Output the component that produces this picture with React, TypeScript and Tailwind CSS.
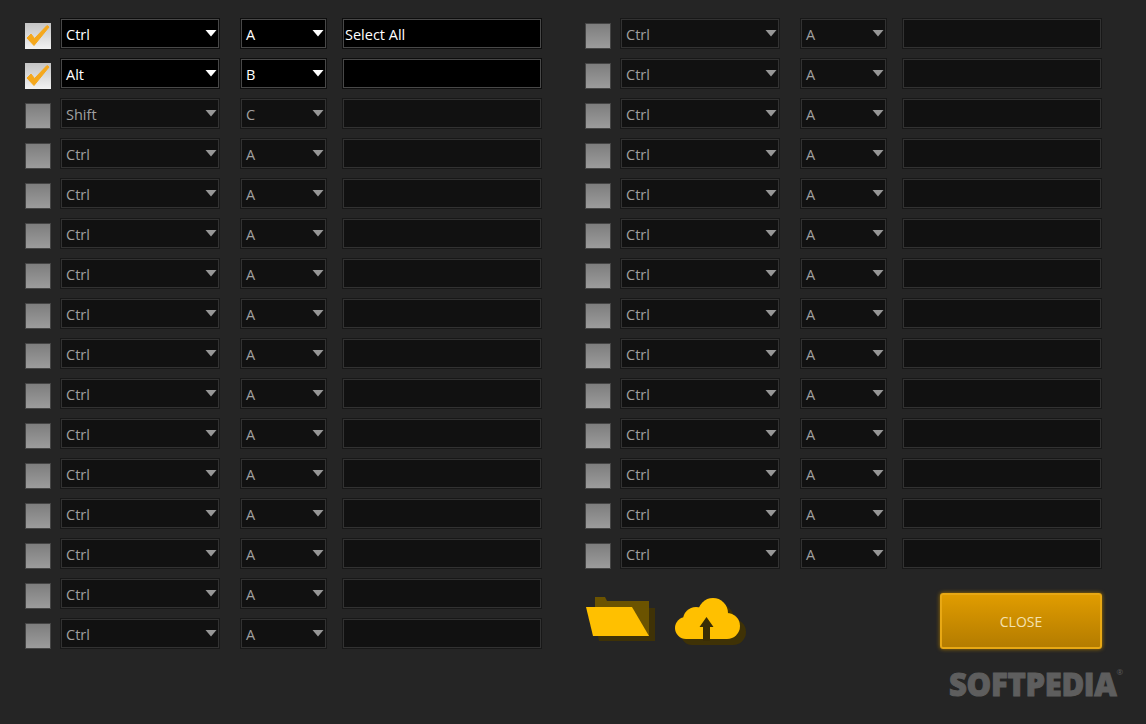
const Caret = ({ on }: { on: boolean }) => (
  <svg width="12" height="8" viewBox="0 0 12 8" className="mb-[2px] shrink-0">
    <path d="M0.5 1 H11.5 L6 7.5 Z" fill={on ? "#ffffff" : "#979797"} />
  </svg>
);

const Check = () => (
  <svg width="26" height="26" viewBox="0 0 26 26" className="absolute top-0 left-0">
    <path d="M2 15 L9 22.5 L24 4 L22 2.5 L9.5 15.5 L6 11 Z" fill="#f5a81c" stroke="#f5a81c" strokeWidth="1" strokeLinejoin="round" />
  </svg>
);

const boxOn = "border-[#0e0e0e] bg-black text-white shadow-[inset_0_0_0_1px_#484848]";
const boxOff = "border-[#181818] bg-[#111111] text-[#a0a0a0] shadow-[inset_0_0_0_1px_#323232]";

const Combo = ({ label, on, wide }: { label: string; on: boolean; wide?: boolean }) => (
  <div
    className={`flex h-[31px] items-center justify-between border pr-[2px] pl-[5px] text-[14.5px] ${
      wide ? "w-[160px]" : "w-[87px]"
    } ${on ? boxOn : boxOff}`}
  >
    <span className="pt-[2px]">{label}</span>
    <Caret on={on} />
  </div>
);

const Row = ({ on, mod = "Ctrl", keyName = "A", text = "" }: { on?: boolean; mod?: string; keyName?: string; text?: string }) => (
  <div className="flex h-[30px] items-start">
    {on ? (
      <div className="relative mt-[5px] h-[26px] w-[26px] bg-gradient-to-b from-[#c4c4c4] to-[#f2f2f2]">
        <Check />
      </div>
    ) : (
      <div className="mt-[5px] h-[26px] w-[26px] border border-[#454545] bg-gradient-to-b from-[#7e7e7e] to-[#9c9c9c]" />
    )}
    <div className="ml-[9px]">
      <Combo label={mod} on={!!on} wide />
    </div>
    <div className="ml-[20px]">
      <Combo label={keyName} on={!!on} />
    </div>
    <div
      className={`ml-[15px] flex h-[31px] w-[200px] items-center border px-[2px] text-[14.5px] ${on ? boxOn : boxOff}`}
    >
      <span className="pt-[2px]">{text}</span>
    </div>
  </div>
);

const FolderIcon = () => (
  <svg width="72" height="52" viewBox="0 0 72 52">
    <path d="M7 17 H64 V13 H70 V46 H14 Z" fill="#3f3206" />
    <path d="M10 2 H20 L22 6 H64 V41 H30 V12 H10 Z" fill="#6b5300" />
    <path d="M1 12 H47 L64 41 H8 Z" fill="#ffc000" />
  </svg>
);

const CloudShape = ({ fill }: { fill: string }) => (
  <g fill={fill}>
    <circle cx="14" cy="33" r="11" />
    <circle cx="24" cy="25" r="13" />
    <circle cx="41" cy="18" r="15" />
    <circle cx="55" cy="31" r="13" />
    <rect x="14" y="30" width="41" height="14" />
  </g>
);

const CloudIcon = () => (
  <svg width="78" height="54" viewBox="0 0 78 54">
    <g transform="translate(6 6)">
      <CloudShape fill="#3f3206" />
    </g>
    <CloudShape fill="#ffc000" />
    <path d="M31 46 V32 H27.5 L34.5 22 L41.5 32 H38 V46 Z" fill="#3a2d05" />
  </svg>
);

const leftRows = [
  { on: true, mod: "Ctrl", keyName: "A", text: "Select All" },
  { on: true, mod: "Alt", keyName: "B" },
  { mod: "Shift", keyName: "C" },
  ...Array.from({ length: 13 }, () => ({})),
];

const rightRows = Array.from({ length: 14 }, () => ({}));

export default function App() {
  return (
    <div
      className="relative flex h-[724px] w-[1146px] gap-[43px] overflow-hidden bg-[#252525] pt-[18px] pl-[25px]"
      style={{ fontFamily: '"Open Sans", "Noto Sans", sans-serif' }}
    >
      <div className="flex w-[517px] flex-col gap-[10px]">
        {leftRows.map((r, i) => (
          <Row key={i} {...r} />
        ))}
      </div>
      <div className="flex w-[517px] flex-col gap-[10px]">
        {rightRows.map((r, i) => (
          <Row key={i} {...r} />
        ))}
        <div className="flex items-start justify-between pt-[15px]">
          <div className="flex gap-[15px] pt-[2px]">
            <FolderIcon />
            <CloudIcon />
          </div>
          <button className="flex h-[56px] w-[162px] items-center justify-center rounded-[3px] border-2 border-[#e8a814] bg-gradient-to-b from-[#e09c00] to-[#b47c00] text-[14px] text-[#f5e2b0] shadow-[0_0_4px_#a87800]">
            CLOSE
          </button>
        </div>
      </div>
      <div className="absolute top-[664px] left-[949px] flex items-start text-[#5e5e5e]">
        <span className="text-[31px] leading-[40px] font-extrabold tracking-[-0.3px] [-webkit-text-stroke:1px_#5e5e5e]">
          SOFTPEDIA
        </span>
        <span className="mt-[3px] text-[8px] leading-[10px]">®</span>
      </div>
    </div>
  );
}
